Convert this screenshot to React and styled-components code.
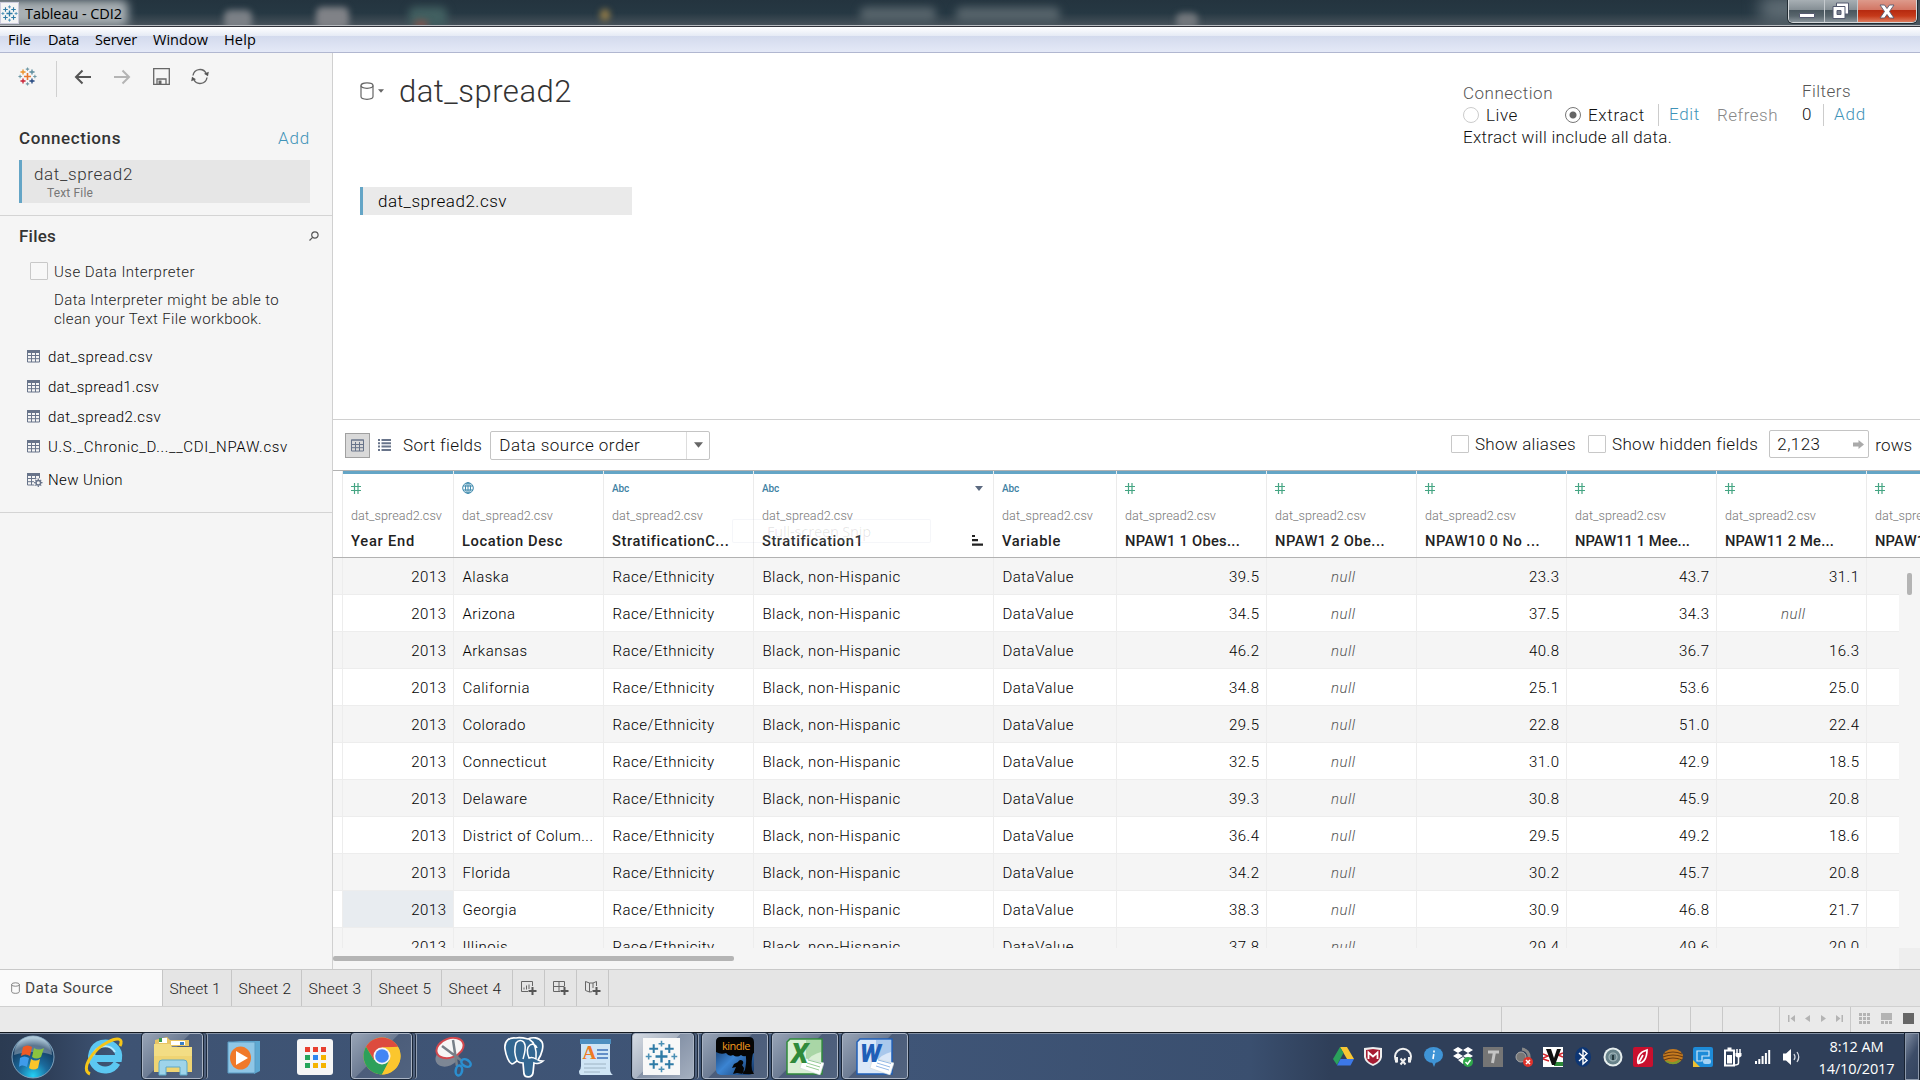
import React, { useLayoutEffect, useRef } from "react";
import styled, { createGlobalStyle, css } from "styled-components";

const Global = createGlobalStyle`
  *, *::before, *::after { box-sizing: border-box; }
  html, body { margin: 0; padding: 0; overflow: hidden; }
  body { font-family: Roboto, "Liberation Sans", sans-serif; color: #333; }
  svg { display: block; flex: none; }
`;

const ui = `"Open Sans", "Noto Sans", sans-serif`;

/* Text tracked so that it fills a known width */
const Tracked = styled.span`
  display: inline-block;
  white-space: nowrap;
  flex: none;
`;
function Fit({ w, children, ...rest }) {
  const ref = useRef(null);
  useLayoutEffect(() => {
    const el = ref.current;
    el.style.letterSpacing = "0px";
    const natural = el.getBoundingClientRect().width;
    el.style.letterSpacing = (w - natural) / Math.max(1, el.textContent.length) + "px";
  }, [w, children]);
  return <Tracked ref={ref} {...rest}>{children}</Tracked>;
}

const Screen = styled.div`
  width: 1920px;
  height: 1080px;
  display: flex;
  flex-direction: column;
  overflow: hidden;
  background: #fff;
`;

/* ---------- window chrome ---------- */
const TitleBar = styled.div`
  position: relative;
  height: 27px;
  flex: none;
  display: flex;
  align-items: flex-start;
  overflow: hidden;
  background: linear-gradient(#24343f 0, #263843 13px, #465159 25px, #b9bcc0 25px, #b9bcc0 26px, #30323a 26px);
`;
const Glow = styled.div`
  position: absolute;
  left: ${(p) => p.$x}px;
  top: ${(p) => p.$y}px;
  width: ${(p) => p.$w}px;
  height: ${(p) => p.$h}px;
  background: ${(p) => p.$c};
  border-radius: 6px;
  filter: blur(${(p) => p.$b || 4}px);
`;
const TitleEdge = styled.div`
  position: absolute;
  left: 0;
  right: 0;
  bottom: 0;
  height: 2px;
  background: linear-gradient(#b9bcc0 1px, #30323a 1px);
`;
const AppIcon = styled.div`
  position: relative;
  width: 19px;
  height: 22px;
  margin-top: 2px;
  background: #f4f4f4;
  border: 1px solid #ccd;
  display: flex;
  align-items: center;
  justify-content: center;
`;
const AppTitle = styled.div`
  position: relative;
  margin-left: 6px;
  font: 14.5px/27px ${ui};
  color: #000;
`;
const WindowButtons = styled.div`
  position: relative;
  margin-left: auto;
  margin-right: 3px;
  display: flex;
  height: 23px;
  border: 1px solid #d3d7da;
  border-top: 0;
  border-radius: 0 0 5px 5px;
  box-shadow: 0 0 0 1px #222c33;
  overflow: hidden;
`;
const WinButton = styled.div`
  width: ${(p) => p.$w}px;
  display: flex;
  align-items: center;
  justify-content: center;
  border-left: ${(p) => (p.$first ? 0 : "1px solid #c5cace")};
  background: ${(p) =>
    p.$close
      ? "linear-gradient(#dd9a8b 0, #d27563 10px, #b5290f 10px, #c63a1a 16px, #dd7a5c)"
      : "linear-gradient(#a7afb4 0, #848e94 10px, #48555d 10px, #59666d 16px, #88939a)"};
`;
const MenuBar = styled.div`
  height: 26px;
  flex: none;
  display: flex;
  align-items: center;
  padding-left: 8px;
  padding-top: 1px;
  border-bottom: 1px solid #b1b7d0;
  background: linear-gradient(#fff 0, #e5eaf5 9px, #d3daed 9px, #e4e9f7 100%);
  font: 14.5px/24px ${ui};
  color: #000;
`;
const MenuItem = styled.div`
  width: ${(p) => p.$w}px;
`;

/* ---------- workspace ---------- */
const Workspace = styled.div`
  height: 916px;
  flex: none;
  display: flex;
`;
const Sidebar = styled.aside`
  width: 333px;
  flex: none;
  background: #f5f5f5;
  border-right: 1px solid #d0d0d0;
`;
const SideTools = styled.div`
  height: 47px;
  margin-bottom: 17px;
  display: flex;
  align-items: center;
  padding-left: 18px;
`;
const ToolCell = styled.div`
  width: 18px;
  margin-right: ${(p) => p.$gap}px;
`;
const ToolRule = styled.div`
  width: 1px;
  height: 36px;
  margin: 5px 17px 0 0;
  background: #d0d0d0;
`;
const SectionHead = styled.div`
  height: ${(p) => p.$h}px;
  padding: 0 ${(p) => p.$pr || 22}px 0 19px;
  display: flex;
  align-items: center;
  justify-content: space-between;
  font-size: 17px;
  font-weight: 500;
  color: #333;
`;
const Link = styled.span`
  color: #3f93b8;
  font-weight: 300;
  font-size: 17px;
`;
const ConnBox = styled.div`
  width: 291px;
  height: 43px;
  margin: 1px 0 12px 19px;
  padding-left: 12px;
  border-left: 3px solid #64a5c6;
  background: #e6e6e6;
  color: #333;
`;
const ConnName = styled.div`
  font-size: 17px;
  line-height: 28px;
  font-weight: 300;
`;
const ConnType = styled.div`
  padding-left: 13px;
  font-size: 12px;
  line-height: 10px;
  color: #777;
`;
const Files = styled.section`
  height: 298px;
  border-top: 1px solid #d4d4d4;
  border-bottom: 1px solid #d4d4d4;
  font-size: 15px;
  font-weight: 300;
`;
const CheckRow = styled.div`
  display: flex;
  align-items: center;
  height: 20px;
  margin-top: 5px;
  padding-left: 30px;
  gap: 6px;
  color: #222;
`;
const Check = styled.span`
  width: 18px;
  height: 18px;
  flex: none;
  border: 1px solid #c8c8c8;
  border-radius: 1px;
  background: ${(p) => p.$bg || "#fff"};
`;
const Nudge = styled.span`
  display: flex;
  padding-top: ${(p) => p.$t || 0}px;
  padding-bottom: ${(p) => p.$b || 0}px;
`;
const Hint = styled.div`
  margin: 10px 0 13px 54px;
  line-height: 19px;
  color: #222;
`;
const HintLine = styled.div`
  height: 19px;
`;
const FileRow = styled.div`
  height: ${(p) => p.$h || 30}px;
  padding-left: 27px;
  display: flex;
  align-items: center;
  color: #000;
`;
const FileIcon = styled.div`
  width: 21px;
  padding-bottom: 1px;
`;

const Main = styled.main`
  width: 1587px;
  display: flex;
  flex-direction: column;
  background: #fff;
`;
const Canvas = styled.section`
  height: 367px;
  flex: none;
  border-bottom: 1px solid #d0d0d0;
`;
const CanvasHead = styled.header`
  height: 134px;
  display: flex;
  align-items: flex-start;
`;
const TitleRow = styled.div`
  height: 76px;
  width: 1130px;
  padding-left: 27px;
  display: flex;
  align-items: center;
`;
const Title = styled.h1`
  margin: 2px 0 0 15px;
  font-size: 31px;
  line-height: 76px;
  font-weight: 300;
  color: #333;
`;
const ConnPanel = styled.div`
  width: 339px;
  padding-top: 29px;
  font-size: 17px;
  line-height: 22px;
  font-weight: 300;
  color: #111;
`;
const FilterPanel = styled(ConnPanel)`
  width: 118px;
  padding-top: 27px;
  line-height: 23px;
`;
const Line = styled.div`
  height: ${(p) => p.$h || 22}px;
  display: flex;
  align-items: center;
  color: ${(p) => p.$c || "inherit"};
`;
const Radio = styled.span`
  width: 16px;
  height: 16px;
  margin-right: 7px;
  border-radius: 50%;
  border: 1px solid ${(p) => (p.$on ? "#777" : "#ccc")};
  background: ${(p) => (p.$on ? "radial-gradient(circle, #666 0 3px, #fff 4px)" : "#fff")};
`;
const Gap = styled.span`
  width: ${(p) => p.$w}px;
  flex: none;
`;
const VRule = styled.span`
  width: 1px;
  height: 22px;
  background: #ccc;
  margin: 0 ${(p) => p.$r}px 0 ${(p) => p.$l}px;
`;
const TableChip = styled.div`
  width: 272px;
  height: 28px;
  margin-left: 27px;
  padding-left: 15px;
  border-left: 3px solid #64a5c6;
  background: #eaeaea;
  color: #000;
  font-size: 17px;
  line-height: 29px;
  font-weight: 300;
`;

/* ---------- grid toolbar ---------- */
const GridTools = styled.div`
  height: 50px;
  flex: none;
  display: flex;
  align-items: center;
  padding-left: 12px;
  font-size: 17px;
  font-weight: 300;
  color: #111;
`;
const Toggle = styled.div`
  width: 25px;
  height: 25px;
  display: flex;
  align-items: center;
  justify-content: center;
  background: #d9d9d9;
  border: 1px solid #a0a0a0;
`;
const Select = styled.div`
  width: 220px;
  height: 29px;
  margin-left: 8px;
  display: flex;
  align-items: center;
  border: 1px solid #c4c4c4;
  border-radius: 2px;
`;
const SelectText = styled.div`
  flex: 1;
  padding-left: 8px;
`;
const SelectArrow = styled.div`
  width: 23px;
  height: 100%;
  display: flex;
  align-items: center;
  justify-content: center;
  border-left: 1px solid #ddd;
`;
const RightTools = styled.div`
  width: 470px;
  height: 48px;
  margin: 0 0 2px auto;
  display: flex;
  align-items: center;
`;
const RowsInput = styled.div`
  width: 100px;
  height: 28px;
  margin: 0 6px 0 11px;
  padding: 0 4px 0 7px;
  display: flex;
  align-items: center;
  justify-content: space-between;
  border: 1px solid #c4c4c4;
  border-radius: 2px;
`;

/* ---------- data grid ---------- */
const Grid = styled.section`
  position: relative;
  height: 499px;
  border-top: 1px solid #b2b2b2;
  display: flex;
  flex-direction: column;
  overflow: hidden;
`;
const tracks = "10px 111px 150px 150px 240px 123px 150px 150px 150px 150px 150px 150px";
const HeadRow = styled.div`
  height: 87px;
  flex: none;
  display: grid;
  grid-template-columns: ${tracks};
  border-bottom: 1px solid #b2b2b2;
`;
const HeadCell = styled.div`
  border-right: 1px solid #ebebeb;
`;
const Accent = styled.div`
  height: 3px;
  background: #64a5c6;
`;
const TypeLine = styled.div`
  height: 28px;
  padding: 0 10px 0 8px;
  display: flex;
  align-items: center;
  justify-content: space-between;
  font-size: 10px;
  font-weight: 500;
  color: #3f82a3;
`;
const SourceLine = styled.div`
  height: 27px;
  padding-left: 8px;
  font-size: 12.6px;
  line-height: 28px;
  font-weight: 300;
  color: #777;
`;
const NameLine = styled.div`
  height: 23px;
  padding: 0 10px 0 8px;
  display: flex;
  align-items: center;
  justify-content: space-between;
  font-size: 14.7px;
  font-weight: 500;
  color: #222;
`;
const Body = styled.div`
  height: 390px;
  flex: none;
  overflow: hidden;
  display: flex;
  background: #f5f5f5;
`;
const Rows = styled.div`
  width: 1587px;
  flex: none;
`;
const Row = styled.div`
  height: 37px;
  display: grid;
  grid-template-columns: ${tracks};
  background: ${(p) => (p.$odd ? "#fff" : "#f5f5f5")};
  border-bottom: 1px solid #ededed;
`;
const Blank = styled.div`
  border-right: 1px solid #ededed;
`;
const Cell = styled.div`
  overflow: hidden;
  white-space: nowrap;
  height: 36px;
  padding: 0 6.5px 0 8.4px;
  border-right: 1px solid #ededed;
  font-size: 15px;
  line-height: 39px;
  letter-spacing: 0.5px;
  font-weight: 300;
  color: #000;
  text-align: ${(p) => p.$align || "left"};
  ${(p) => p.$hover && css`background: #e8ecf0;`}
  ${(p) => p.$null && css`color: #555; font-style: italic; text-align: center; padding-left: 10px;`}
`;
const VTrack = styled.div`
  position: absolute;
  right: 0;
  top: 87px;
  width: 21px;
  height: 411px;
  background: linear-gradient(#f5f5f5 390px, #eee 390px);
`;
const VThumb = styled.div`
  width: 5px;
  height: 22px;
  margin: 15px 0 0 8px;
  border-radius: 2px;
  background: #b4b4b4;
`;
const HScroll = styled.div`
  flex: 1;
  padding-top: 8px;
  background: #f5f5f5;
`;
const HThumb = styled.div`
  width: 401px;
  height: 5px;
  border-radius: 2px;
  background: #b4b4b4;
`;
const FadingTip = styled.div`
  position: absolute;
  left: 399px;
  top: 48px;
  width: 199px;
  height: 24px;
  padding-left: 34px;
  border: 1px solid rgba(90, 110, 160, 0.06);
  border-radius: 2px;
  background: rgba(255, 255, 255, 0.1);
  font: 14.5px/24px ${ui};
  color: rgba(0, 0, 0, 0.1);
`;

/* ---------- bottom bars ---------- */
const Tabs = styled.nav`
  height: 38px;
  flex: none;
  display: flex;
  background: #e5e5e5;
  border-top: 1px solid #c9c9c9;
  border-bottom: 1px solid #d0d0d0;
`;
const Tab = styled.div`
  width: ${(p) => p.$w}px;
  display: flex;
  align-items: center;
  justify-content: center;
  border-right: 1px solid #c6c6c6;
  font-size: 15.5px;
  font-weight: 400;
  color: #555;
  ${(p) => p.$sheet && css`
    justify-content: flex-start;
    padding: 2px 0 0 6.5px;
    font-weight: 300;
    color: #222;
  `}
  ${(p) => p.$active && css`
    justify-content: flex-start;
    padding-left: 11px;
    gap: 5px;
    background: #fafafa;
    color: #444;
  `}
`;
const Status = styled.div`
  height: 25px;
  flex: none;
  display: flex;
  justify-content: flex-end;
  background: #eaeaea;
`;
const StatusCell = styled.div`
  width: ${(p) => p.$w}px;
  border-left: 1px solid #c9c9c9;
  display: flex;
  align-items: center;
  padding: 0 0 2px ${(p) => p.$pl || 0}px;
  gap: ${(p) => p.$gap || 0}px;
`;

/* ---------- taskbar ---------- */
const Taskbar = styled.div`
  height: 48px;
  flex: none;
  display: flex;
  align-items: stretch;
  border-top: 1px solid #14191f;
  box-shadow: inset 0 1px 0 #8390a3;
  background: linear-gradient(90deg, #2b3b52 0, #2f405a 50px, #3e5373 110px, #3f5577 900px, #3a4f6f 1250px, #2f3f59 1330px, #2f3f59 100%);
`;
const Launch = styled.div`
  width: ${(p) => p.$w}px;
  display: flex;
  align-items: center;
  justify-content: center;
  flex: none;
`;
const Running = styled.div`
  width: ${(p) => p.$w}px;
  margin: 0 ${(p) => p.$mr || 0}px 1px 0;
  padding-right: ${(p) => p.$pr || 0}px;
  flex: none;
  display: flex;
  align-items: center;
  justify-content: center;
  border: 1px solid #aab4c4;
  border-radius: 3px;
  outline: 1px solid #1a2637;
  outline-offset: 0;
  box-shadow: ${(p) => (p.$stack ? "3px 0 0 #4e5f7b, 4px 0 0 #1d2a3d, 5px 0 0 #94a0b3" : "none")};
  background: ${(p) =>
    p.$active
      ? "linear-gradient(135deg, #d5dbe3 0, #a9b3c2 45%, #8592a7 46%, #a4afbf 100%)"
      : "linear-gradient(135deg, #98a4b6 0, #6c7b93 45%, #4c5d7a 46%, #51637f 100%)"};
`;
const Tray = styled.div`
  margin-left: auto;
  display: flex;
  align-items: center;
`;
const TrayIcon = styled.div`
  width: 30px;
  display: flex;
  justify-content: center;
`;
const Clock = styled.div`
  width: 97px;
  padding-top: 2px;
  text-align: center;
  font: 14.5px/22px ${ui};
  color: #fff;
`;
const ShowDesktop = styled.div`
  align-self: stretch;
  width: 14px;
  margin-right: 1px;
  border: 1px solid #8c98aa;
  outline: 1px solid #182231;
  background: linear-gradient(120deg, #7e8ba0, #3d4d68 50%, #34445e);
`;

/* ---------- drawings ---------- */
const Plus = ({ x, y, r, c, w }) => (
  <path d={`M${x - r} ${y}H${x + r}M${x} ${y - r}V${y + r}`} stroke={c} strokeWidth={w} />
);
function TableauMark({ size, colors, k = 1 }) {
  const [a, b, c, d, e, f] = colors;
  return (
    <svg width={size} height={size} viewBox="0 0 36 36" fill="none">
      <Plus x={18} y={18} r={6.5} c={a} w={2.6 * k} />
      <Plus x={9.5} y={9.5} r={4.8} c={b} w={2.2 * k} />
      <Plus x={26.5} y={9.5} r={4.8} c={c} w={2.2 * k} />
      <Plus x={9.5} y={26.5} r={4.8} c={d} w={2.2 * k} />
      <Plus x={26.5} y={26.5} r={4.8} c={e} w={2.2 * k} />
      <Plus x={18} y={4} r={3.2} c={f} w={1.7 * k} />
      <Plus x={18} y={32} r={3.2} c={f} w={1.7 * k} />
      <Plus x={4} y={18} r={3.2} c={f} w={1.7 * k} />
      <Plus x={32} y={18} r={3.2} c={f} w={1.7 * k} />
    </svg>
  );
}
const blues = ["#2f7ba6", "#2f7ba6", "#2f7ba6", "#2f7ba6", "#2f7ba6", "#4b90b5"];
const Arrow = ({ c, flip }) => (
  <svg width="18" height="16" viewBox="0 0 18 16" fill="none" stroke={c} strokeWidth="2" transform={flip ? "scale(-1 1)" : undefined}>
    <path d="M17 8H2M8.500 1.500L2 8l6.500 6.500" />
  </svg>
);
const SaveIcon = () => (
  <svg width="17" height="17" fill="none" stroke="#666" strokeWidth="1.3">
    <path d="M.7.7h15.600v15.600H.7zM4 16v-5h9v5" />
    <path d="M5.500 12.500h3v3.500h-3z" fill="#666" stroke="none" />
  </svg>
);
const RefreshIcon = () => (
  <svg width="18" height="17" viewBox="0 0 18 17" fill="none" stroke="#666" strokeWidth="1.400">
    <path d="M2 7.500A7 7 0 0 1 15.200 5.500M16 9.500A7 7 0 0 1 2.800 11.500" />
    <path d="M17.800 3.800l-.8 4.400-4-2.400zM.2 13.200l.8-4.400 4 2.400z" fill="#555" stroke="none" />
  </svg>
);
const SearchIcon = () => (
  <svg width="10" height="10" fill="none" stroke="#555" strokeWidth="1.200">
    <circle cx="5.900" cy="4" r="3.200" />
    <path d="M3.600 6.400L.5 9.500" />
  </svg>
);
const TableIcon = ({ size = 13, gear, thin }) => (
  <svg width={gear ? 16 : size} height={gear ? 14 : 13} viewBox={gear ? "0 0 16 14" : "0 0 13 13"} fill="none">
    <path d="M.5 1h12v11H.5zM.5 5.500h12M.5 8.700h12M4.500 3v9M8.500 3v9" stroke="#68748a" strokeWidth="1" />
    <path d={thin ? "M0 .5h13v1H0z" : "M0 0h13v3H0z"} fill="#68748a" />
    {gear && (
      <g>
        <circle cx="11.300" cy="9.700" r="4.600" fill="#f5f5f5" />
        <circle cx="11.300" cy="9.700" r="2.300" stroke="#68748a" strokeWidth="1.500" />
        <path d="M11.300 5.500v1.500M11.300 12.400v1.500M7.100 9.700h1.500M14 9.700h1.500M8.400 6.800l1 1M13.200 11.600l1 1M14.200 6.800l-1 1M9.400 11.600l-1 1" stroke="#68748a" strokeWidth="1.200" />
      </g>
    )}
  </svg>
);
const Caret = ({ w = 9, h = 5, c = "#666" }) => (
  <svg width={w} height={h} viewBox="0 0 10 6"><path d="M0 0h10L5 6z" fill={c} /></svg>
);
const Cylinder = ({ w, h }) => (
  <svg width={w} height={h} viewBox="0 0 14 18" fill="none" stroke="#666" strokeWidth="1.200">
    <ellipse cx="7" cy="3.600" rx="6" ry="2.700" />
    <path d="M1 3.600v11c0 1.600 2.700 2.700 6 2.700s6-1.100 6-2.700v-11" />
  </svg>
);
const Hash = () => (
  <svg width="10" height="11" stroke="#45a583" strokeWidth="1.200"><path d="M3.500 0v11M7 0v11M0 3.500h10M0 7.500h10" /></svg>
);
const Globe = () => (
  <svg width="12" height="12" fill="none" stroke="#3a87ab" strokeWidth="1">
    <circle cx="6" cy="6" r="5.300" /><ellipse cx="6" cy="6" rx="2.500" ry="5.300" /><path d="M6 .7v10.600M1.200 4h9.600M1.200 8h9.600" />
  </svg>
);
const SortIcon = () => (
  <svg width="11" height="11"><path d="M0 0h3v2H0zM0 4h6v2.200H0zM0 8.500h11v2.200H0z" fill="#222" /></svg>
);
const ListIcon = () => (
  <svg width="13" height="12" fill="#68748a">
    {[0, 3.3, 6.6, 9.9].map((y) => <path key={y} d={`M0 ${y}h2v2H0zM3.500 ${y}H13v2H3.500z`} />)}
  </svg>
);
const NewSheet = ({ kind }) => (
  <svg width="17" height="16" fill="none" stroke="#666" strokeWidth="1">
    {kind === 0 && <path d="M12.500 6V1.500h-11v10H8M4 9.500V7.500M6.500 9.500v-4M9 9V4.500" />}
    {kind === 1 && <path d="M12.500 6V1.500h-11v10H8M1.500 6.500h11M7 1.500v10" />}
    {kind === 2 && <path d="M12.500 6V1.500L9 3 5.500 3 1.500 1.500v9L5.500 12 8 11.700M5.500 3v9M9 3v5" />}
    <path d="M12.500 7v8M8.500 11h8" strokeWidth="2" stroke="#555" />
  </svg>
);
const Nav = ({ d }) => <svg width="8" height="9" fill="#b4b4b4"><path d={d} /></svg>;

/* taskbar pictures */
const Orb = () => (
  <svg width="44" height="44" viewBox="0 0 44 44">
    <defs>
      <radialGradient id="orb" cx=".5" cy=".95" r=".9">
        <stop offset="0" stopColor="#23d0f5" /><stop offset=".4" stopColor="#1b6a9c" /><stop offset=".8" stopColor="#153a5e" /><stop offset="1" stopColor="#8ab0c8" />
      </radialGradient>
    </defs>
    <circle cx="22" cy="22" r="21" fill="url(#orb)" stroke="#7fa2bd" />
    <path d="M3 20a19 19 0 0 1 38 0c-9-4-27-4-38 0z" fill="#fff" opacity=".3" />
    <path d="M12 12c3-2 6-2 9 0l-2 9c-3-2-6-2-9 0z" fill="#ee5a24" />
    <path d="M23 13c3 2 6 2 10 0l-3 9c-3 2-6 2-9 0z" fill="#8bc43f" />
    <path d="M9 23c3-2 6-2 9 0l-2 9c-3-2-6-2-8 0z" fill="#3f9bea" />
    <path d="M20 24c3 2 6 2 9 0l-2 9c-3 2-6 2-9 0z" fill="#fcc52c" />
  </svg>
);
const Explorer7 = () => (
  <svg width="42" height="42" viewBox="0 0 42 42" fill="none">
    <path d="M34 27A13.500 13.500 0 1 1 35.500 22.500H12" stroke="#5cc8f2" strokeWidth="7" />
    <path d="M10 20a12 12 0 0 1 22-4" stroke="#b5ebff" strokeWidth="2" />
    <path d="M7 38C-3 34 9 14 25 6c9-5 16-4 12 4" stroke="#f5c518" strokeWidth="3" />
  </svg>
);
const Folder = () => (
  <svg width="40" height="40" viewBox="0 0 40 40">
    <path d="M2 4l12-3 3 3h19v6H2z" fill="#e9c564" />
    <path d="M6 2h8v5H6z" fill="#fff" /><path d="M6 2h3v4H6z" fill="#3b9b4c" /><path d="M18 5h14v4H18z" fill="#fff" /><path d="M27 6h4v3h-4z" fill="#3a7fc8" />
    <path d="M1 8h16l2 3h20v25H1z" fill="#f3dd84" /><path d="M1 20h38v16H1z" fill="#edcf68" opacity=".6" />
    <path d="M6 39V27q0-3 3-3h22q3 0 3 3v12h-7v-8H13v8z" fill="#9ed4ea" stroke="#5fa9c8" />
  </svg>
);
const Player = () => (
  <svg width="34" height="36" viewBox="0 0 34 36">
    <path d="M6 2h27v30l-6 3V5z" fill="#5da8d2" /><path d="M1 3h27v31H1z" fill="#8fc6e6" stroke="#5b9cc4" />
    <ellipse cx="13.500" cy="19" rx="10.500" ry="11.500" fill="#f0792a" /><path d="M9 12v14l12-7z" fill="#fff" />
  </svg>
);
const Apps = () => (
  <svg width="38" height="38"><rect x="1" y="1" width="36" height="36" rx="3" fill="#f6f6f6" />
    {["#e8402f", "#e8402f", "#e8402f", "#26a65b", "#2d86f0", "#f5b400", "#26a65b", "#f5b400", "#f5b400"].map((c, i) => (
      <rect key={i} x={9 + (i % 3) * 8} y={9 + Math.floor(i / 3) * 8} width="5" height="5" fill={c} />
    ))}
  </svg>
);
const Chrome = () => (
  <svg width="38" height="38" viewBox="-19 -19 38 38">
    <circle r="18.500" fill="#fbc62e" />
    <path d="M-16-9.250A18.500 18.500 0 0 1 16-9.250L0-8.500-8 4z" fill="#dd4b3e" />
    <path d="M-16-9.250A18.500 18.500 0 0 0 0 18.500L8 4H-8z" fill="#2da05a" />
    <path d="M16.500-8.500H0L7.500 4 0 18.500A18.500 18.500 0 0 0 16.500-8.500z" fill="#fbc62e" />
    <circle r="8.500" fill="#f5f5f5" /><circle r="6.800" fill="#4285f4" />
  </svg>
);
const Snip = () => (
  <svg width="38" height="40" viewBox="0 0 38 40" fill="none">
    <ellipse cx="13" cy="20" rx="12" ry="9" fill="#8d949d" opacity=".8" transform="rotate(-25 13 20)" />
    <ellipse cx="16" cy="11" rx="14" ry="9.500" fill="#f6f6f6" stroke="#d2484e" strokeWidth="2" transform="rotate(-20 16 11)" />
    <path d="M8 9l20 15M19 3l4 26" stroke="#777f88" strokeWidth="2.500" />
    <ellipse cx="32" cy="26" rx="5" ry="3.300" stroke="#2b8fd0" strokeWidth="2.500" transform="rotate(30 32 26)" />
    <ellipse cx="25" cy="33.500" rx="3.200" ry="5" stroke="#2b8fd0" strokeWidth="2.500" transform="rotate(10 25 33)" />
  </svg>
);
const Elephant = () => (
  <svg width="42" height="42" viewBox="0 0 42 42">
    <path d="M13 2C6 1 1 5 2 13c1 7 4 14 7 15 2 0 3-2 5-3 2 2 4 2 6 2l1 11c1 4 8 4 9-1l1-10c3 1 7 0 9-2-2 0-4 0-5-1 4-6 6-14 4-18-3-5-10-5-14-3-4-1-8-2-12-1z" fill="#336791" stroke="#fff" strokeWidth="1.700" />
    <path d="M14 25c-2-5-3-12-1-18 3-4 8-3 9 2 1 5-1 10-2 14M26 3c5 3 8 9 7 20-3-2-5-2-7-1-2-5-3-10 1-13 3-2 6 0 7 3" fill="none" stroke="#fff" strokeWidth="1.500" />
  </svg>
);
const LetterArt = styled.span`
  position: absolute;
  left: ${(p) => p.$x}px;
  top: ${(p) => p.$y}px;
  font: ${(p) => p.$f};
  color: ${(p) => p.$c};
  letter-spacing: ${(p) => p.$ls || 0}px;
`;
const Art = styled.div`
  position: relative;
`;
const WordPad = () => (
  <Art>
    <svg width="34" height="38" viewBox="0 0 34 38">
      <path d="M2 3h29v28q0 4 3 6H2q-2 0-2-4 2-2 2-5z" fill="#cfe5f5" /><path d="M1 1h31v5H1z" fill="#4d8fc0" />
      <path d="M18 12h11M18 16h11M18 20h11" stroke="#3f72b8" strokeWidth="1.600" /><path d="M5 26h22M5 30h22M5 34h16" stroke="#9eb4c4" strokeWidth="1" />
    </svg>
    <LetterArt $x={4} $y={5} $f={`bold 19px/20px "Liberation Serif", serif`} $c="#ee7a22">A</LetterArt>
  </Art>
);
const WhiteTile = styled.div`
  width: 37px;
  height: 37px;
  display: flex;
  align-items: center;
  justify-content: center;
  background: #f8f8f8;
`;
const Kindle = () => (
  <Art>
    <svg width="38" height="38" viewBox="0 0 38 38">
      <defs><linearGradient id="kd" x1="0" y1="0" x2="1" y2="1"><stop offset="0" stopColor="#0b254d" /><stop offset=".5" stopColor="#3b84d2" /><stop offset="1" stopColor="#12315f" /></linearGradient></defs>
      <rect width="38" height="38" rx="5" fill="url(#kd)" />
      <path d="M0 5q0-5 5-5h28q5 0 5 5v11q-3 3-6 1-3 4-7 1-4 3-8 0-4 2-7-2-5 2-10-1z" fill="#050505" />
      <path d="M29 16c2 6 1 12 0 17l-3 4h12l-2-4c-1-6 0-12 1-17zM22 25a2.700 2.700 0 1 1 4 3l2 3-1 6-6-1-4 1 3-7-4 1 2-4z" fill="#050505" />
    </svg>
    <LetterArt $x={6} $y={1} $f={`11px/15px ${ui}`} $c="#f39a1d" $ls={-0.5}>kindle</LetterArt>
  </Art>
);
const Office = ({ c1, c2, letter, paper }) => (
  <Art>
    <svg width="38" height="37" viewBox="0 0 38 37">
      <path d="M4 1h32v35H1V4z" fill={paper} stroke={c1} strokeWidth="1.500" />
      <path d="M20 2h15v12q-9 2-15 10z" fill={c2} opacity=".35" />
      <path d="M17 20l21 5-4 12-20-7z" fill="#fff" stroke="#cdd6d8" strokeWidth=".6" />
      <path d="M21 25l13 4M20 28l13 4M22 22l13 3.500" stroke={c2} strokeWidth="1" opacity=".6" />
    </svg>
    <LetterArt $x={letter === "W" ? 4 : 5} $y={2} $f={`italic 900 ${letter === "W" ? 25 : 28}px/28px Roboto, sans-serif`} $c={c1}>{letter}</LetterArt>
  </Art>
);

/* tray pictures */
const tray = [
  <svg width="21" height="19" viewBox="0 0 21 19"><path d="M7 0h7l7 12h-7z" fill="#f8c733" /><path d="M7 0l3.500 6L4 18 0 12z" fill="#2aa15b" /><path d="M7.500 12H21l-3.500 6.500H4z" fill="#3c78e8" /></svg>,
  <svg width="18" height="19" viewBox="0 0 18 19"><path d="M9 0l9 1v9q-1 6-9 9-8-3-9-9V1z" fill="#eee" /><path d="M9 2l7 1v7q-1 5-7 7-6-2-7-7V3z" fill="#a61c33" /><path d="M4.500 12V5.500L9 9.500l4.500-4V12" fill="none" stroke="#fff" strokeWidth="1.800" /></svg>,
  <svg width="20" height="20" viewBox="0 0 20 20" fill="none" stroke="#f0f0f0"><path d="M4 15A8 8 0 1 1 16 15" strokeWidth="2" /><path d="M3.500 10v5.500M16.500 10v5.500" strokeWidth="3" /><path d="M7.500 11.500l5 6M12.500 11.500l-5 6" strokeWidth="2" /></svg>,
  <svg width="19" height="20" viewBox="0 0 19 20"><ellipse cx="9.500" cy="8" rx="9.500" ry="8" fill="#3f94d6" /><path d="M8 15l2 5 2-5z" fill="#3f94d6" /><path d="M10 3.500v2M9.800 7L9 12" stroke="#fff" strokeWidth="1.600" /></svg>,
  <svg width="20" height="20" viewBox="0 0 20 20"><path d="M5 0l5 3-5 3-5-3zM15 0l5 3-5 3-5-3zM5 6l5 3-5 3-5-3zM15 6l5 3-5 3-5-3zM5 13l5-3 5 3-5 4z" fill="#fff" /><circle cx="15" cy="15" r="5" fill="#2fa84a" /><path d="M12.500 15l2 2 3-4" stroke="#fff" strokeWidth="1.500" fill="none" /></svg>,
  <svg width="20" height="20"><rect width="20" height="20" fill="#757575" /><path d="M5 5h11M11.500 5l-2 11" stroke="#c4c4c4" strokeWidth="3" /></svg>,
  <svg width="20" height="20" viewBox="0 0 20 20"><circle cx="8" cy="10" r="5" fill="#777" stroke="#aaa" /><path d="M9 2a8 8 0 0 1 7 9" fill="none" stroke="#888" strokeWidth="3" /><circle cx="15" cy="15" r="5" fill="#e0332b" /><path d="M13 13l4 4M17 13l-4 4" stroke="#fff" strokeWidth="1.500" /></svg>,
  <svg width="20" height="20"><rect width="20" height="20" fill="#fff" /><path d="M0 7l5 2-5 2M0 12l6 2M20 6l-5 2 5 2" stroke="#d2232a" strokeWidth="1.500" fill="none" /><path d="M11 15h9v4h-9z" fill="#2e8b3a" /><path d="M3 2h5l3 9 3-9h4l-6 16h-3z" fill="#111" /></svg>,
  <svg width="16" height="20" viewBox="0 0 16 20"><ellipse cx="8" cy="10" rx="8" ry="10" fill="#0d3674" /><path d="M4 6l8 7.500L8 17V3l4 3.500L4 14" fill="none" stroke="#fff" strokeWidth="1.400" /></svg>,
  <svg width="20" height="20"><circle cx="10" cy="10" r="9.500" fill="#e6eeee" /><circle cx="10" cy="10" r="7.500" fill="#67828a" /><circle cx="10" cy="10" r="4" fill="none" stroke="#a5b9bd" strokeWidth="1.200" /><path d="M10 8v5" stroke="#23383e" strokeWidth="2" /></svg>,
  <svg width="20" height="20"><rect width="20" height="20" rx="2" fill="#c8102e" /><path d="M14 3C7 5 4 10 5 16c4 1 9-3 9-13zM5 17l5-9" fill="none" stroke="#fff" strokeWidth="1.700" /></svg>,
  <svg width="20" height="17" viewBox="0 0 20 17"><ellipse cx="10" cy="8.500" rx="10" ry="7.500" fill="#c77b1f" /><path d="M1 6q9-4 18 0M0 9q10-4 20 0M1 12q9-4 18 0" fill="none" stroke="#6b3d12" strokeWidth="1.200" /><path d="M3 13q8 5 14-1" fill="none" stroke="#7d9b2e" strokeWidth="2" /></svg>,
  <svg width="20" height="20"><rect width="20" height="20" rx="2" fill="#1d8bd8" /><path d="M4 4h12v5H9v5H4z" fill="none" stroke="#cfe8fa" strokeWidth="1.200" /><path d="M0 13l7 7H0z" fill="#f0c030" /><rect x="10" y="12" width="8" height="5" rx="2" fill="#a5d3f5" /></svg>,
  <svg width="20" height="20" viewBox="0 0 20 20" fill="none" stroke="#fff"><path d="M2 3.500h9v15H2zM4.500 1.500h4" strokeWidth="2" /><path d="M4 8h5v8.500H4z" fill="#fff" stroke="none" /><path d="M14 2v4M17 2v4M15.500 10v6q0 2-4 2" strokeWidth="1.500" /><path d="M12.500 6h6v3q-3 3-6 0z" fill="#fff" stroke="none" /></svg>,
  <svg width="16" height="15" fill="#fff"><path d="M0 12h2v3H0zM3.300 10h2v5h-2zM6.600 7h2v8h-2zM9.900 4h2v11h-2zM13.200 1h2v14h-2z" /></svg>,
  <svg width="20" height="18" viewBox="0 0 20 18"><path d="M0 5.500h3L8 1v16l-5-4.500H0z" fill="#fff" /><path d="M11 6q2 3 0 6M14 4q3.500 5 0 10" fill="none" stroke="#d5dae2" strokeWidth="1.300" /></svg>,
];

/* ---------- data ---------- */
const columns = [
  { type: "num", name: "Year End", w: 64 },
  { type: "geo", name: "Location Desc", w: 101 },
  { type: "abc", name: "StratificationC...", w: 117 },
  { type: "abc", name: "Stratification1", w: 101, menu: true },
  { type: "abc", name: "Variable", w: 59 },
  { type: "num", name: "NPAW1 1 Obes...", w: 115 },
  { type: "num", name: "NPAW1 2 Obe...", w: 110 },
  { type: "num", name: "NPAW10 0 No ...", w: 115 },
  { type: "num", name: "NPAW11 1 Mee...", w: 115 },
  { type: "num", name: "NPAW11 2 Me...", w: 109 },
  { type: "num", name: "NPAW11 3 ...", w: 88 },
];
const data = [
  ["Alaska", "39.5", "23.3", "43.7", "31.1"],
  ["Arizona", "34.5", "37.5", "34.3", null],
  ["Arkansas", "46.2", "40.8", "36.7", "16.3"],
  ["California", "34.8", "25.1", "53.6", "25.0"],
  ["Colorado", "29.5", "22.8", "51.0", "22.4"],
  ["Connecticut", "32.5", "31.0", "42.9", "18.5"],
  ["Delaware", "39.3", "30.8", "45.9", "20.8"],
  ["District of Colum...", "36.4", "29.5", "49.2", "18.6"],
  ["Florida", "34.2", "30.2", "45.7", "20.8"],
  ["Georgia", "38.3", "30.9", "46.8", "21.7"],
  ["Illinois", "37.8", "29.4", "49.6", "20.0"],
];
const files = [["dat_spread.csv", 105], ["dat_spread1.csv", 111], ["dat_spread2.csv", 113], ["U.S._Chronic_D...__CDI_NPAW.csv", 240]];
const sheets = [["Sheet 1", 69, 51], ["Sheet 2", 70, 53], ["Sheet 3", 70, 53], ["Sheet 5", 70, 53], ["Sheet 4", 71, 53]];

const Value = ({ v }) => (v === null ? <Cell $null>null</Cell> : <Cell $align="right">{v}</Cell>);

export default function App() {
  return (
    <Screen>
      <Global />
      <TitleBar>
        <Glow $x={-20} $y={0} $w={148} $h={26} $c="#a9b0b4" $b={5} />
        <Glow $x={224} $y={10} $w={28} $h={20} $c="#7b8086" $b={3} />
        <Glow $x={316} $y={7} $w={33} $h={22} $c="#808287" $b={3} />
        <Glow $x={409} $y={7} $w={38} $h={20} $c="#426061" $b={4} />
        <Glow $x={414} $y={20} $w={14} $h={8} $c="#7a5550" $b={3} />
        <Glow $x={600} $y={9} $w={10} $h={12} $c="#8f7a48" $b={3} />
        <Glow $x={860} $y={7} $w={76} $h={15} $c="#56636a" $b={4} />
        <Glow $x={956} $y={7} $w={104} $h={15} $c="#56636a" $b={4} />
        <Glow $x={1176} $y={13} $w={22} $h={16} $c="#72777c" $b={3} />
        <Glow $x={1760} $y={-4} $w={160} $h={26} $c="#5f6c74" $b={8} />
        <TitleEdge />
        <AppIcon><TableauMark size={17} colors={blues} k={1.1} /></AppIcon>
        <AppTitle><Fit w={97}>Tableau - CDI2</Fit></AppTitle>
        <WindowButtons>
          <WinButton $w={35} $first>
            <svg width="16" height="18"><path d="M.5 11.500h15v4H.5z" fill="#fff" stroke="#555a70" /></svg>
          </WinButton>
          <WinButton $w={33}>
            <svg width="18" height="18"><path d="M4.500 1h12v11h-12z" fill="#fff" stroke="#555a70" /><path d="M1 4.500h12v12H1z" fill="#fff" stroke="#555a70" /><path d="M5 8.500h4v4H5z" fill="#777f8d" stroke="#555a70" /></svg>
          </WinButton>
          <WinButton $w={59} $close>
            <svg width="16" height="15"><path d="M1 1h4.500l2.500 3.500L10.500 1H15l-4.500 6.500L15 14h-4.500L8 10.500 5.500 14H1l4.500-6.500z" fill="#fff" stroke="#555a70" strokeWidth=".9" /></svg>
          </WinButton>
        </WindowButtons>
      </TitleBar>
      <MenuBar>
        <MenuItem $w={40}><Fit w={23}>File</Fit></MenuItem>
        <MenuItem $w={47}><Fit w={31}>Data</Fit></MenuItem>
        <MenuItem $w={58}><Fit w={42}>Server</Fit></MenuItem>
        <MenuItem $w={71}><Fit w={55}>Window</Fit></MenuItem>
        <MenuItem $w={60}><Fit w={32}>Help</Fit></MenuItem>
      </MenuBar>

      <Workspace>
        <Sidebar>
          <SideTools>
            <ToolCell $gap={20}><TableauMark size={19} k={1.15} colors={["#e8762d", "#eb9129", "#5a8a9c", "#c72035", "#1f447e", "#7099a6"]} /></ToolCell>
            <ToolRule />
            <ToolCell $gap={21}><Arrow c="#555" /></ToolCell>
            <ToolCell $gap={22}><Arrow c="#b4b4b4" flip /></ToolCell>
            <ToolCell $gap={20}><SaveIcon /></ToolCell>
            <ToolCell $gap={0}><RefreshIcon /></ToolCell>
          </SideTools>
          <SectionHead $h={42}><Fit w={102}>Connections</Fit><Link><Fit w={32}>Add</Fit></Link></SectionHead>
          <ConnBox>
            <ConnName><Fit w={99}>dat_spread2</Fit></ConnName>
            <ConnType><Fit w={46}>Text File</Fit></ConnType>
          </ConnBox>
          <Files>
            <SectionHead $h={40} $pr={13}><Fit w={37}>Files</Fit><SearchIcon /></SectionHead>
            <CheckRow><Check $bg="#f7f7f7" /><Nudge $t={2}><Fit w={141}>Use Data Interpreter</Fit></Nudge></CheckRow>
            <Hint>
              <HintLine><Fit w={225}>Data Interpreter might be able to</Fit></HintLine>
              <HintLine><Fit w={208}>clean your Text File workbook.</Fit></HintLine>
            </Hint>
            {files.map(([f, w]) => (
              <FileRow key={f}><FileIcon><TableIcon /></FileIcon><Fit w={w}>{f}</Fit></FileRow>
            ))}
            <FileRow $h={36}><FileIcon><TableIcon gear /></FileIcon><Fit w={75}>New Union</Fit></FileRow>
          </Files>
        </Sidebar>

        <Main>
          <Canvas>
            <CanvasHead>
              <TitleRow>
                <Cylinder w={14} h={18} /><Gap $w={4} /><Caret w={6} h={4} />
                <Title><Fit w={173}>dat_spread2</Fit></Title>
              </TitleRow>
              <ConnPanel>
                <Line $c="#555"><Fit w={90}>Connection</Fit></Line>
                <Line>
                  <Radio /><Fit w={32}>Live</Fit><Gap $w={47} />
                  <Radio $on /><Fit w={57}>Extract</Fit>
                  <VRule $l={13} $r={10} /><Link><Nudge $b={2}><Fit w={31}>Edit</Fit></Nudge></Link><Gap $w={17} />
                  <Line $c="#888"><Fit w={61}>Refresh</Fit></Line>
                </Line>
                <Line><Fit w={209}>Extract will include all data.</Fit></Line>
              </ConnPanel>
              <FilterPanel>
                <Line $h={23} $c="#555"><Fit w={49}>Filters</Fit></Line>
                <Line $h={23}><Fit w={12}>0</Fit><VRule $l={9} $r={10} /><Link><Fit w={32}>Add</Fit></Link></Line>
              </FilterPanel>
            </CanvasHead>
            <TableChip><Fit w={129}>dat_spread2.csv</Fit></TableChip>
          </Canvas>

          <GridTools>
            <Toggle><TableIcon thin /></Toggle>
            <Gap $w={8} /><ListIcon /><Gap $w={12} />
            <Fit w={79}>Sort fields</Fit>
            <Select>
              <SelectText><Fit w={141}>Data source order</Fit></SelectText>
              <SelectArrow><Caret w={9} h={6} /></SelectArrow>
            </Select>
            <RightTools>
              <Gap $w={1} /><Check /><Gap $w={6} /><Fit w={101}>Show aliases</Fit>
              <Gap $w={12} /><Check /><Gap $w={6} /><Fit w={146}>Show hidden fields</Fit>
              <RowsInput>
                <Fit w={43}>2,123</Fit>
                <svg width="11" height="9" fill="#aaa"><path d="M0 2.500h5.500V0L11 4.500 5.500 9V6.500H0z" /></svg>
              </RowsInput>
              <Nudge $t={2}><Fit w={37}>rows</Fit></Nudge>
            </RightTools>
          </GridTools>

          <Grid>
            <HeadRow>
              <HeadCell />
              {columns.map((c) => (
                <HeadCell key={c.name}>
                  <Accent />
                  <TypeLine>
                    {c.type === "num" ? <Hash /> : c.type === "geo" ? <Globe /> : <Fit w={17}>Abc</Fit>}
                    {c.menu && <Caret w={8} h={5} c="#5c6a80" />}
                  </TypeLine>
                  <SourceLine><Fit w={91}>dat_spread2.csv</Fit></SourceLine>
                  <NameLine><Fit w={c.w}>{c.name}</Fit>{c.menu && <SortIcon />}</NameLine>
                </HeadCell>
              ))}
            </HeadRow>
            <Body>
              <Rows>
                {data.map((r, i) => (
                  <Row key={r[0]} $odd={i % 2 === 1}>
                    <Blank />
                    <Cell $align="right" $hover={i === 9}>2013</Cell>
                    <Cell>{r[0]}</Cell>
                    <Cell>Race/Ethnicity</Cell>
                    <Cell>Black, non-Hispanic</Cell>
                    <Cell>DataValue</Cell>
                    <Value v={r[1]} />
                    <Value v={null} />
                    <Value v={r[2]} />
                    <Value v={r[3]} />
                    <Value v={r[4]} />
                    <Blank />
                  </Row>
                ))}
              </Rows>
            </Body>
            <HScroll><HThumb /></HScroll>
            <VTrack><VThumb /></VTrack>
            <FadingTip><Fit w={104}>Full-screen Snip</Fit></FadingTip>
          </Grid>
        </Main>
      </Workspace>

      <Tabs>
        <Tab $w={163} $active><Cylinder w={9} h={12} /><Fit w={88}>Data Source</Fit></Tab>
        {sheets.map(([s, w, t]) => <Tab key={s} $w={w} $sheet><Fit w={t}>{s}</Fit></Tab>)}
        {[0, 1, 2].map((k) => <Tab key={k} $w={32}><NewSheet kind={k} /></Tab>)}
      </Tabs>
      <Status>
        <StatusCell $w={157} /><StatusCell $w={32} /><StatusCell $w={32} /><StatusCell $w={57} />
        <StatusCell $w={71} $pl={8} $gap={8}>
          <Nav d="M0 1h1.500v7H0zM7 1v7L2.500 4.500z" /><Nav d="M6 1v7L1 4.500z" /><Nav d="M1 1v7l5-3.500z" /><Nav d="M0 1v7l4.500-3.500zM5.500 1H7v7H5.500z" />
        </StatusCell>
        <StatusCell $w={70} $pl={8} $gap={11}>
          <svg width="11" height="11" fill="#b4b4b4"><path d="M0 0h3v3H0zM4 0h3v3H4zM8 0h3v3H8zM0 4h3v3H0zM4 4h3v3H4zM8 4h3v3H8zM0 8h3v3H0zM4 8h3v3H4zM8 8h3v3H8z" /></svg>
          <svg width="11" height="11" fill="#b4b4b4"><path d="M0 0h11v7H0zM0 8h3v3H0zM4 8h3v3H4zM8 8h3v3H8z" /></svg>
          <svg width="11" height="11"><path d="M0 0h11v11H0z" fill="#666" /></svg>
        </StatusCell>
      </Status>

      <Taskbar>
        <Launch $w={66}><Orb /></Launch>
        <Launch $w={76}><Explorer7 /></Launch>
        <Running $w={61} $stack><Folder /></Running>
        <Launch $w={81}><Player /></Launch>
        <Launch $w={62}><Apps /></Launch>
        <Gap $w={5} />
        <Running $w={61} $stack><Chrome /></Running>
        <Launch $w={82}><Snip /></Launch>
        <Launch $w={60}><Elephant /></Launch>
        <Gap $w={5} />
        <Launch $w={73}><WordPad /></Launch>
        <Running $w={62} $mr={8} $pr={4} $stack $active><WhiteTile><TableauMark size={33} colors={blues} /></WhiteTile></Running>
        <Running $w={66} $mr={4}><Kindle /></Running>
        <Running $w={66} $mr={4}><Office letter="X" c1="#2f8a3b" c2="#4fa84f" paper="#d9efd4" /></Running>
        <Running $w={66}><Office letter="W" c1="#1f5fb8" c2="#4d8bd6" paper="#dbe8f8" /></Running>
        <Tray>
          {tray.map((t, i) => <TrayIcon key={i}>{t}</TrayIcon>)}
          <Clock><div><Fit w={54}>8:12 AM</Fit></div><div><Fit w={76}>14/10/2017</Fit></div></Clock>
          <ShowDesktop />
        </Tray>
      </Taskbar>
    </Screen>
  );
}
